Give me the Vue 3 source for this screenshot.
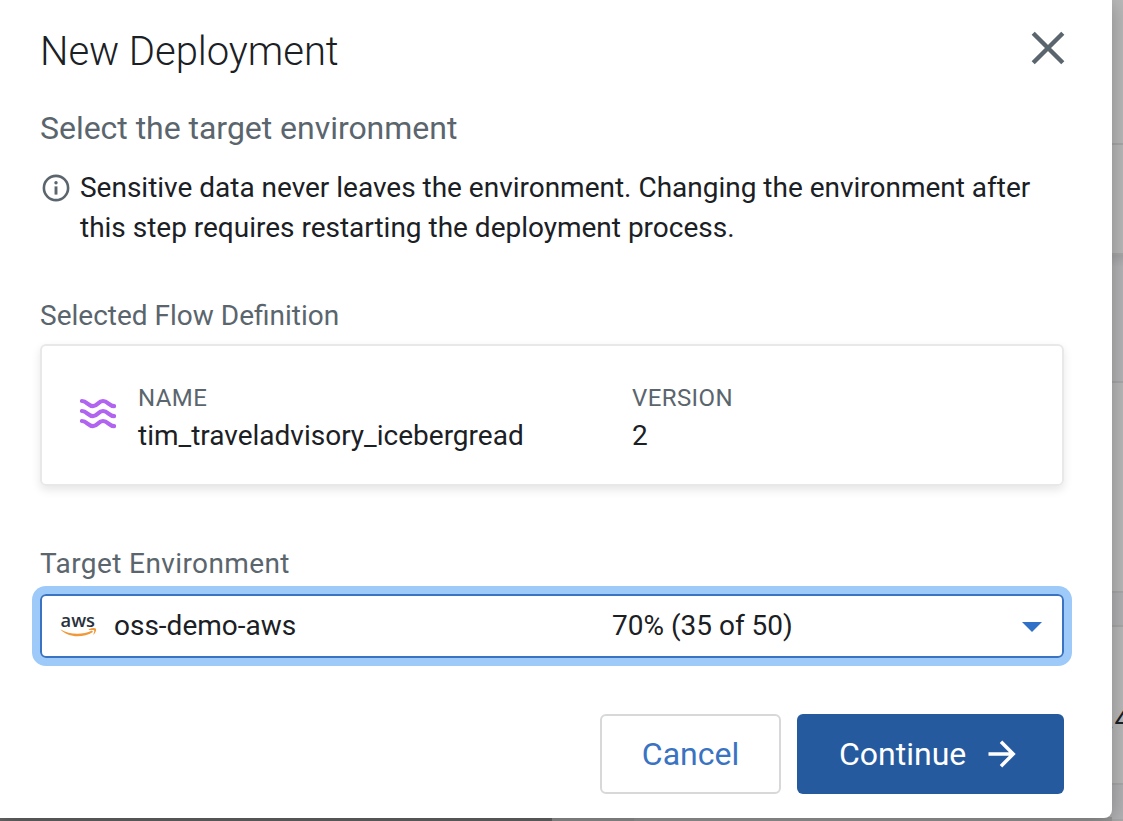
<script setup>
const flow = { name: 'tim_traveladvisory_icebergread', version: '2' }
const environment = { name: 'oss-demo-aws', usage: '70% (35 of 50)' }
</script>

<template>
  <div class="page">
    <div class="backdrop">
      <div class="strip s1"></div>
      <div class="strip s2"></div>
      <div class="strip s3"></div>
      <div class="strip s4"></div>
      <div class="strip s5"></div>
      <div class="strip s6"><span class="peek">.4</span></div>
      <div class="strip s7"></div>
    </div>
    <div class="below"><i class="nav"></i><i class="gap"></i><i class="panel"></i></div>
    <section class="dialog" role="dialog">
      <header class="head">
        <h1>New Deployment</h1>
        <svg class="close" width="34" height="34" viewBox="0 0 34 34"><path d="M2.2 2.2 31.8 31.8M31.8 2.2 2.2 31.8" fill="none" stroke="#5a656d" stroke-width="4.4" /></svg>
      </header>
      <h2>Select the target environment</h2>
      <div class="notice">
        <svg width="28" height="28" viewBox="0 0 28 28"><circle cx="14" cy="14" r="12.1" fill="none" stroke="#5a656d" stroke-width="2.6" /><path d="M14 12.4V20.6" stroke="#5a656d" stroke-width="2.9" /><circle cx="14" cy="8.8" r="1.7" fill="#5a656d" /></svg>
        <p>Sensitive data never leaves the environment. Changing the environment after<br />this step requires restarting the deployment process.</p>
      </div>
      <div class="label flow-label">Selected Flow Definition</div>
      <div class="card">
        <svg class="waves" width="36" height="32" viewBox="0 0 36 32" fill="none" stroke="#b164ef" stroke-width="4.2" stroke-linecap="round">
          <path d="M2 3C7 3 8 8.1 13 8.1S18 3 23 3 29 8.1 34 8.1" />
          <path d="M2 13C7 13 8 18.1 13 18.1S18 13 23 13 29 18.1 34 18.1" />
          <path d="M2 23C7 23 8 28.1 13 28.1S18 23 23 23 29 28.1 34 28.1" />
        </svg>
        <div class="field name"><small>NAME</small><span>{{ flow.name }}</span></div>
        <div class="field version"><small>VERSION</small><span>{{ flow.version }}</span></div>
      </div>
      <div class="label env-label">Target Environment</div>
      <div class="select">
        <svg class="aws" width="38" height="28" viewBox="0 0 38 28">
          <text x="0.5" y="14.5" textLength="34.5" lengthAdjust="spacingAndGlyphs">aws</text>
          <path d="M.3 17.2C9.5 22.7 22 23.4 32 18.5L33 20C22 26.7 7.5 25.3.3 17.2Z" fill="#f0993b" />
          <path d="M28.8 17.2C32 15.9 35 15.7 36 16.8 36.6 18.4 35.3 21.3 33.2 23 33.8 21 34.7 18.8 34 18.2 33 17.7 30.8 18 28.8 18.1Z" fill="#f0993b" />
        </svg>
        <span class="env">{{ environment.name }}</span>
        <span class="usage">{{ environment.usage }}</span>
        <svg class="caret" width="20" height="10" viewBox="0 0 20 10"><path d="M0 0H20L10 10Z" fill="#2f71c7" /></svg>
      </div>
      <footer>
        <button class="cancel"><span>Cancel</span></button>
        <button class="continue"><span>Continue</span><svg width="28" height="28" viewBox="0 0 28 28"><path d="M.5 14H25M13 1.8 25.2 14 13 26.2" fill="none" stroke="#fff" stroke-width="3.5" /></svg></button>
      </footer>
    </section>
  </div>
</template>

<style>
body { margin: 0; overflow: hidden; }
</style>

<style scoped>
* { box-sizing: border-box; }
.page { position: relative; width: 1123px; height: 821px; overflow: hidden; background: #b8b8b8; font-family: Roboto, "Liberation Sans", sans-serif; color: #1b2025; }
.backdrop { display: flex; flex-direction: column; height: 821px; }
.strip { flex: none; border-bottom: 2px solid #a9a9aa; background: #b9b9b9; }
.s1 { height: 145px; }
.s2 { height: 110px; }
.s3 { height: 128px; background: linear-gradient(#a6a6a8, #b5b5b7 12px); }
.s4 { height: 210px; }
.s5 { height: 34px; background: #b2b2b5; }
.s6 { height: 158px; padding: 77px 0 0 1107px; font-size: 28px; line-height: 32px; }
.s7 { height: 36px; background: #b2b2b5; }
.peek { white-space: nowrap; }
.below { position: absolute; left: 0; bottom: 0; width: 1112px; height: 4px; display: flex; background: #969696; }
.nav { width: 552px; background: #666; }
.gap { width: 82px; background: #929292; }
.panel { flex: 1; background: #999; }
.dialog { position: absolute; left: 0; top: 0; width: 1112px; height: 818px; padding: 0 48px 0 40px; background: #fff; border-radius: 0 0 8px 0; box-shadow: 0 4px 22px rgba(0,0,0,.28); }
.head { display: flex; justify-content: space-between; height: 104px; padding-top: 28px; }
h1 { margin: 1px 0 0; font-weight: 300; font-size: 40px; line-height: 46px; letter-spacing: -.04px; }
.close { margin: 3px -1px 0 0; }
h2 { margin: 0; height: 64px; font-weight: 400; font-size: 32px; line-height: 48px; letter-spacing: -.03px; color: #5a656d; }
.notice { display: flex; gap: 10px; height: 112px; padding-left: 2px; }
.notice svg { flex: none; margin-top: 6px; }
p { margin: 0; font-size: 28px; line-height: 40px; letter-spacing: -.01px; white-space: nowrap; }
.label { font-size: 28px; line-height: 40px; color: #5a656d; }
.flow-label { margin-top: 16px; height: 48px; }
.card { display: flex; width: 1024px; height: 142px; padding: 34px 38px; border: 2px solid #e8e8e8; border-radius: 6px; box-shadow: 0 4px 10px rgba(0,0,0,.1); }
.waves { flex: none; margin-top: 18px; }
.field { display: flex; flex-direction: column; }
.field small { font-size: 24px; line-height: 36px; letter-spacing: .4px; color: #5a656d; }
.field span { font-size: 28px; line-height: 40px; }
.name { width: 494px; margin-left: 22px; }
.env-label { margin-top: 58px; height: 50px; letter-spacing: .4px; }
.select { display: flex; align-items: center; width: 1024px; height: 64px; padding: 0 20px 0 18px; border: 2px solid #3973c2; border-radius: 6px; box-shadow: 0 0 0 8px #9dcaf9; font-size: 28px; line-height: 34px; }
.aws { overflow: visible; }
.aws text { font: 600 18.5px "Open Sans", "Noto Sans", sans-serif; fill: #29313d; }
.env { width: 498px; margin-left: 16px; }
.caret { margin: 2px 0 0 auto; }
footer { display: flex; justify-content: flex-end; gap: 16px; margin-top: 56px; }
button { display: flex; align-items: center; height: 80px; border-radius: 6px; font-family: inherit; font-size: 32px; }
.cancel { width: 181px; justify-content: center; padding: 0; border: 2px solid #d7d8d9; background: #fff; color: #3973c2; }
.continue { width: 267px; padding: 0 0 0 42px; gap: 22px; border: 0; background: #265a9f; color: #fff; }
</style>
